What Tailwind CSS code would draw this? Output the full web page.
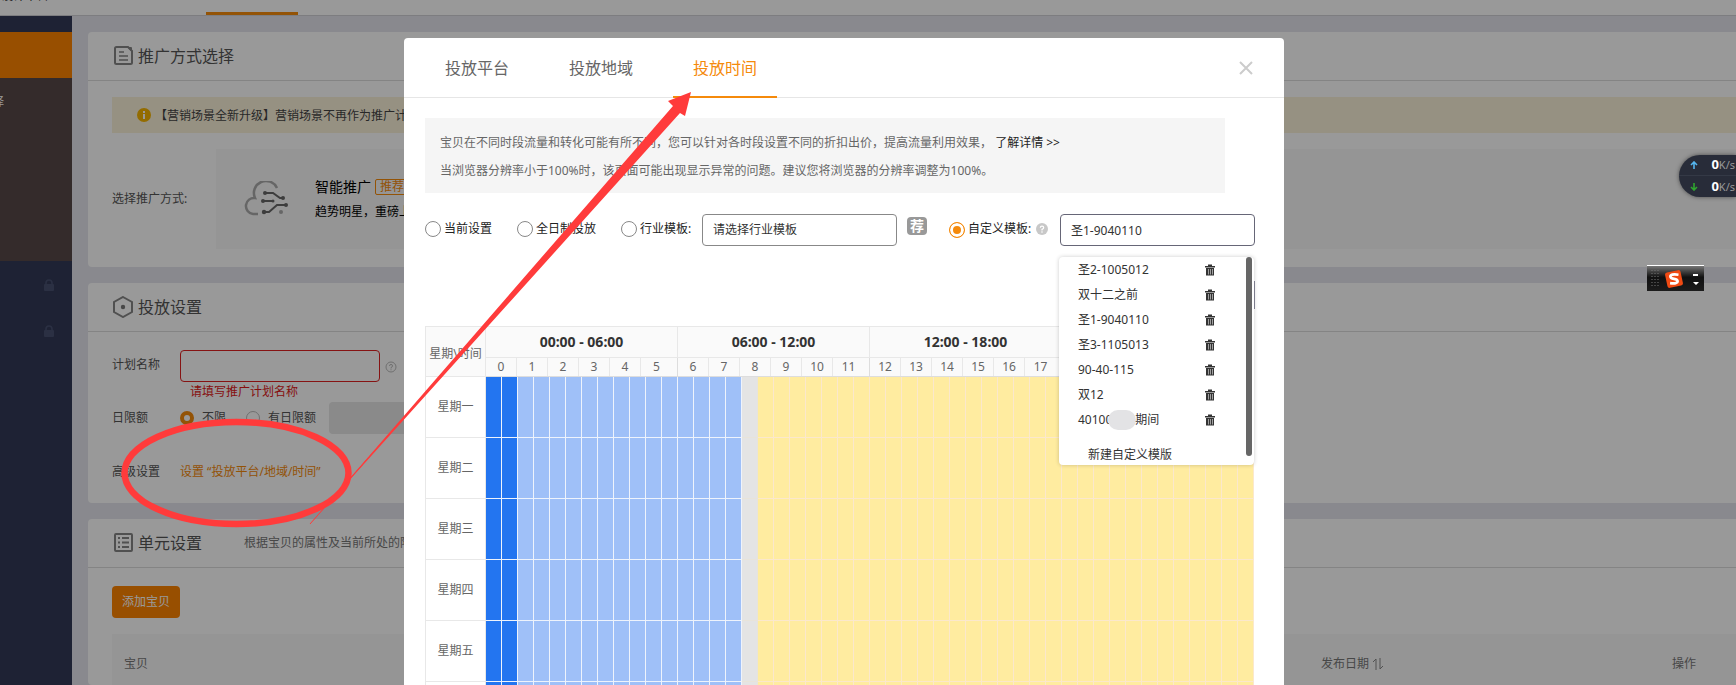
<!DOCTYPE html>
<html lang="zh-CN">
<head>
<meta charset="utf-8">
<title>投放设置</title>
<script src="https://cdn.jsdelivr.net/npm/@tailwindcss/browser@4"></script>
</head>
<body class="relative h-screen overflow-hidden bg-[#e4e5ed] font-['Noto_Sans','Noto_Sans_CJK_SC',sans-serif] text-xs text-[#555]">

<!-- Page behind the dialog -->
<div class="flex h-full flex-col">
  <header class="flex h-4 shrink-0 border-b border-[#d0d0d6] bg-white">
    <div class="flex w-[206px] items-start"><span class="-mt-3 h-4 pl-px text-[#333]">设计平台</span></div>
    <div class="w-[92px] border-b-3 border-[#f58a0b]"></div>
  </header>

  <div class="flex min-h-0 flex-1">
    <nav class="w-[72px] shrink-0 bg-[#323a57] pt-4">
      <div class="h-[46px] bg-[#fd8400]"></div>
      <div class="flex h-[183px] bg-[#584949] pt-3">
        <a href="#" class="flex h-5 w-1 items-end justify-end whitespace-nowrap text-white">场景选择</a>
      </div>
      <div class="flex flex-col items-end gap-[34px] pt-[18px] pr-[17px]">
        <svg class="h-3 w-3 text-[#485070]" viewBox="0 0 12 12"><path d="M3 6V4a3 3 0 0 1 6 0v2" fill="none" stroke="currentColor" stroke-width="1.6"/><rect x="1" y="5" width="10" height="7" rx="1" fill="currentColor"/></svg>
        <svg class="h-3 w-3 text-[#485070]" viewBox="0 0 12 12"><path d="M3 6V4a3 3 0 0 1 6 0v2" fill="none" stroke="currentColor" stroke-width="1.6"/><rect x="1" y="5" width="10" height="7" rx="1" fill="currentColor"/></svg>
      </div>
    </nav>

    <main class="flex min-w-0 flex-1 flex-col gap-4 pt-4 pl-4">
      <section class="h-[235px] shrink-0 rounded-l bg-white">
        <div class="flex h-[49px] items-center gap-1 border-b border-[#ddd] pl-6">
          <svg class="h-[22px] w-[22px]" viewBox="0 0 22 22" fill="none" stroke="#858585" stroke-width="2"><path d="M16 2H4.500Q3 2 3 3.500V17.500Q3 19 4.500 19H18.500Q20 19 20 17.500V6z"/><path d="M7 7h5M7 11h9M7 15h9" stroke-width="1.600"/><path d="M15 2l5 5V3q0-1-1-1z" fill="#858585" stroke="none"/></svg>
          <h2 class="text-base text-[#555]">推广方式选择</h2>
        </div>
        <div class="pt-4 pl-6">
          <div class="flex h-9 items-center gap-1 bg-[#faf2d9] pl-[25px]">
            <svg class="h-[14px] w-[14px]" viewBox="0 0 14 14"><circle cx="7" cy="7" r="7" fill="#f5b400"/><path d="M6 3h2v2H6zM6 6h2v5H6z" fill="#fff"/></svg>
            <span class="pt-px whitespace-nowrap text-[#444]">【营销场景全新升级】营销场景不再作为推广计划维度</span>
          </div>
          <div class="flex items-center pt-4">
            <span class="w-[104px]">选择推广方式:</span>
            <div class="flex h-[100px] flex-1 items-center bg-[#f8f8f8] pl-7">
              <svg class="h-9 w-11" viewBox="0 0 44 36" fill="none" stroke-width="2"><path d="M14 33H9A8 8 0 0 1 11 17A12 12 0 0 1 33 7" stroke="#aaa" stroke-width="2.500"/><g stroke="#666"><path d="M20 12h9l7 5h3M18 20h10M20 31h5l8-7h9"/></g><g fill="#666"><circle cx="21" cy="12" r="2"/><circle cx="39" cy="17" r="2"/><circle cx="19" cy="20" r="2"/><circle cx="29" cy="20" r="1.500"/><circle cx="20" cy="31" r="2.200"/><circle cx="42" cy="24" r="2"/></g><circle cx="37" cy="31" r="2" fill="#aaa"/></svg>
              <div class="flex flex-col gap-[5px] pl-[27px] text-black">
                <div class="flex items-center gap-1 text-sm whitespace-nowrap">智能推广 <span class="rounded-xs border border-[#f58a0b] px-1 text-xs leading-[14px] text-[#f58a0b]">推荐</span></div>
                <div class="whitespace-nowrap leading-5">趋势明星，重磅上线</div>
              </div>
            </div>
          </div>
        </div>
      </section>

      <section class="h-[220px] shrink-0 rounded-l bg-white">
        <div class="flex h-[49px] items-center gap-1 border-b border-[#ddd] pl-6">
          <svg class="h-[22px] w-[22px]" viewBox="0 0 22 22"><path d="M11 1l9 5v10l-9 5-9-5V6z" fill="none" stroke="#858585" stroke-width="2"/><circle cx="11" cy="11" r="2.200" fill="#777"/></svg>
          <h2 class="text-base text-[#555]">投放设置</h2>
        </div>
        <form class="pl-6">
          <div class="flex h-[50px] items-end">
            <label for="plan" class="w-[68px] leading-[34px]">计划名称</label>
            <input id="plan" class="h-8 w-[200px] rounded border border-[#e02020] px-2">
            <svg class="mb-[9px] ml-[5px] h-3 w-3" viewBox="0 0 12 12" fill="none" stroke="#bbb"><circle cx="6" cy="6" r="5"/><path d="M4.500 5q0-1.600 1.500-1.600T7.500 5Q7.500 6 6 6.600V7.500M6 8.300v1"/></svg>
          </div>
          <p class="pl-[78px] leading-5 text-[#e01818]">请填写推广计划名称</p>
          <div class="flex h-8 items-center">
            <span class="w-[68px]">日限额</span>
            <label class="flex items-center gap-2"><input type="radio" name="limit" checked class="h-[14px] w-[14px] appearance-none rounded-full border-4 border-[#f58a0b] bg-white">不限</label>
            <label class="ml-5 flex items-center gap-2"><input type="radio" name="limit" class="h-[14px] w-[14px] appearance-none rounded-full border border-[#bbb]">有日限额</label>
            <input aria-label="日限额" disabled class="ml-[13px] h-8 w-[100px] rounded bg-[#e6e6e6]">
          </div>
          <div class="flex h-[76px] items-center">
            <span class="w-[68px]">高级设置</span>
            <a href="#" class="text-[#f58a0b]">设置 “投放平台/地域/时间”</a>
          </div>
        </form>
      </section>

      <section class="min-h-0 flex-1 rounded-l bg-white">
        <div class="flex h-[49px] items-center gap-1 border-b border-[#ddd] pl-6">
          <svg class="h-[22px] w-[22px]" viewBox="0 0 22 22" fill="none" stroke="#858585" stroke-width="2"><rect x="3" y="2" width="17" height="17" rx="1"/><path d="M6 6h2M6 10.500h2M6 15h2M10 6h7M10 10.500h7M10 15h7"/></svg>
          <h2 class="text-base text-[#555]">单元设置</h2>
          <span class="pl-[38px] whitespace-nowrap text-[#777]">根据宝贝的属性及当前所处的阶段</span>
        </div>
        <div class="pt-[18px] pl-6">
          <button class="h-8 w-[68px] rounded bg-[#fd8400] text-white">添加宝贝</button>
          <table class="mt-4 w-full bg-[#f8f8f8] text-left">
            <thead><tr class="h-[60px]">
              <th class="pl-3 font-normal text-[#777]">宝贝</th>
              <th class="w-[351px] font-normal text-[#777]"><span class="flex items-center gap-[3px]">发布日期<svg class="h-3 w-3" viewBox="0 0 12 12" fill="none" stroke="#888"><path d="M1 4l3-3v11M8 0v11l3-3"/></svg></span></th>
              <th class="w-16 font-normal text-[#777]">操作</th>
            </tr></thead>
          </table>
        </div>
      </section>
    </main>
  </div>
</div>

<!-- Dialog -->
<div class="absolute inset-0 flex justify-center bg-black/40 pt-[38px] pr-12">
  <div role="dialog" aria-label="投放时间" class="w-[880px] rounded-t bg-white text-[#333]">
    <div class="flex h-[60px] items-stretch gap-5 border-b border-[#e6e6e6] pl-[21px] text-base text-[#666]">
      <button class="-mb-px w-[104px]">投放平台</button>
      <button class="-mb-px w-[104px]">投放地域</button>
      <button class="-mb-px w-[104px] border-b-2 border-[#f58a0b] pt-[2px] text-[#f58a0b]">投放时间</button>
      <button aria-label="关闭" class="mr-[31px] ml-auto"><svg class="h-[14px] w-[14px]" viewBox="0 0 14 14" stroke="#ccc" stroke-width="2"><path d="M1 1l12 12M13 1L1 13"/></svg></button>
    </div>

    <div class="mx-[21px]">
      <div class="mt-5 mr-[38px] bg-[#f5f5f5] px-[15px] pt-[11px] pb-2 leading-7 text-[#666]">
        <p>宝贝在不同时段流量和转化可能有所不同，您可以针对各时段设置不同的折扣出价，提高流量利用效果， <a href="#" class="text-[#222]">了解详情 &gt;&gt;</a></p>
        <p>当浏览器分辨率小于100%时，该页面可能出现显示异常的问题。建议您将浏览器的分辨率调整为100%。</p>
      </div>

      <div class="relative mt-[21px] mr-2 flex h-8 items-center text-[#222]">
        <label class="flex w-[92px] items-center gap-[3px] pb-[2px]"><input type="radio" name="tpl" class="h-4 w-4 appearance-none rounded-full border border-[#888]">当前设置</label>
        <label class="flex w-[104px] items-center gap-[3px] pb-[2px]"><input type="radio" name="tpl" class="h-4 w-4 appearance-none rounded-full border border-[#888]">全日制投放</label>
        <label class="flex w-[81px] items-center gap-[3px] pb-[2px]"><input type="radio" name="tpl" class="h-4 w-4 appearance-none rounded-full border border-[#888]">行业模板:</label>
        <select aria-label="行业模板" class="h-8 w-[195px] appearance-none rounded border border-[#888] bg-white px-[10px] text-[#333]"><option>请选择行业模板</option></select>
        <span class="mb-2 ml-[10px] flex h-[18px] w-5 items-center justify-center rounded-sm bg-[#999] text-sm leading-none font-bold text-white">荐</span>
        <label class="ml-[22px] flex items-center gap-[3px]"><input type="radio" name="tpl" checked class="h-4 w-4 appearance-none rounded-full border border-[#f58a0b] bg-[#f58a0b] shadow-[inset_0_0_0_3px_#fff]"><span class="pb-[2px]">自定义模板:</span></label>
        <svg class="mb-[3px] ml-[5px] h-3 w-3" viewBox="0 0 12 12"><circle cx="6" cy="6" r="6" fill="#c8c8c8"/><path d="M4.300 4.800q0-1.700 1.700-1.700t1.700 1.600Q7.700 5.800 6 6.400V7.500M6 8.300v1.400" fill="none" stroke="#fff" stroke-width="1.200"/></svg>
        <input aria-label="自定义模板" value="圣1-9040110" class="ml-auto h-8 w-[195px] rounded border border-[#667] px-[10px] text-[#333]">

        <!-- Template list -->
        <div class="absolute top-[43px] right-px z-10 flex h-[208px] w-[195px] rounded bg-white shadow-[0_0_4px_rgba(0,0,0,0.2)]">
          <div class="flex-1 pl-[19px] text-[#333]">
            <ul id="templates"></ul>
            <button class="mt-[13px] ml-[10px] leading-5">新建自定义模版</button>
          </div>
          <div class="mr-[2px] h-[199px] w-[6px] rounded-full bg-[#666]"></div>
        </div>
        <div class="absolute top-[67px] right-0 h-7 w-px bg-[#889]"></div>
      </div>

      <table class="mt-20 w-[829px] table-fixed border-separate border-spacing-0 border-t border-l border-[#e8e8e8] text-[#666]">
        <colgroup><col class="w-[60px]"></colgroup>
        <thead class="bg-[#fafafa]">
          <tr id="periods" class="h-[31px]"><th rowspan="2" class="border-r border-b border-[#e8e8e8] pt-1 font-normal whitespace-nowrap">星期\时间</th></tr>
          <tr id="hours" class="h-[19px]"></tr>
        </thead>
        <tbody id="days"></tbody>
      </table>
    </div>
  </div>
</div>

<!-- Network speed widget -->
<div class="absolute top-[155px] right-0 flex h-[42px] w-[57px] flex-col rounded-l-full bg-[#282c39] shadow-[0_0_4px_rgba(0,0,0,0.5)]">
  <div class="flex h-[21px] items-center justify-between border-b border-[#343946] pr-px pl-[11px] text-[11px] whitespace-nowrap text-[#999]">
    <svg class="h-2 w-2" viewBox="0 0 8 8" fill="none" stroke="#55b5ee" stroke-width="1.600"><path d="M1 4l3-3 3 3M4 1v7"/></svg><span><b class="text-[13px] text-white">0</b>K/s</span>
  </div>
  <div class="flex h-[21px] items-center justify-between pr-px pl-[11px] text-[11px] whitespace-nowrap text-[#999]">
    <svg class="h-2 w-2" viewBox="0 0 8 8" fill="none" stroke="#2fa52f" stroke-width="1.600"><path d="M1 4l3 3 3-3M4 7V0"/></svg><span><b class="text-[13px] text-white">0</b>K/s</span>
  </div>
</div>

<!-- Input method bar -->
<div class="absolute top-[265px] right-8 flex h-[26px] w-[57px] items-center border-t border-white bg-linear-to-b from-[#777] via-[#111] via-45% to-[#1c1c1c] pl-1">
  <svg class="h-5 w-[10px]" viewBox="0 0 10 20" stroke="#777" stroke-dasharray="1 2"><path d="M1 1v18M4 1v18M7 1v18"/></svg>
  <svg class="ml-1 h-[18px] w-[18px]" viewBox="0 0 16 16"><rect x="1" y="1" width="14" height="14" rx="2" fill="#f04a13" transform="rotate(-12 8 8)"/><path d="M12 4.200Q4.800 3.200 4.800 5.800q0 1.600 3.200 2.100t3.200 2.200q0 2.300-6.700 1.500" fill="none" stroke="#fff" stroke-width="2.400"/></svg>
  <svg class="ml-[10px] h-[14px] w-[6px]" viewBox="0 0 6 14" fill="#fff"><path d="M0 2h5v2H0zM0 10h6l-3 3z"/></svg>
</div>

<!-- Red annotation: ellipse and arrow -->
<svg class="pointer-events-none absolute top-0 left-0 h-[685px] w-[1736px]" viewBox="0 0 1736 685">
  <ellipse cx="236.500" cy="473" rx="112" ry="51" fill="none" stroke="#ff3b3b" stroke-width="6.500"/>
  <path d="M310 524L673 106L668 101L691 92L685 116L680 113z" fill="#ff3b3b"/>
  <path d="M310 524L400 422" stroke="#ff3b3b"/>
</svg>

<script>
  const names = ['圣2-1005012', '双十二之前', '圣1-9040110', '圣3-1105013', '90-40-115', '双12', '40100'];
  document.getElementById('templates').innerHTML = names.map((n, i) => `
    <li class="flex h-[25px] items-center"><span class="flex-1 flex items-center whitespace-nowrap">${n}${i === 6 ? '<span class="-mr-px -ml-1 h-5 w-7 rounded-full bg-[#e3e3e5]"></span>期间' : ''}</span>
      <button aria-label="删除" class="mr-[31px]"><svg class="h-3 w-[10px]" viewBox="0 0 10 12"><path d="M0 2h3V0.500h4V2h3v1.500H0zM1 4h8v7.500H1z" fill="#333"/><path d="M3.500 5v5.500M5.500 5v5.500M7.500 5v5.500" stroke="#bbb" stroke-width=".8"/></svg></button></li>`).join('');

  const periods = ['00:00 - 06:00', '06:00 - 12:00', '12:00 - 18:00', '18:00 - 24:00'];
  document.getElementById('periods').insertAdjacentHTML('beforeend', periods.map(p =>
    `<th colspan="12" class="border-r border-b border-[#e8e8e8] p-0 text-sm text-[#333]">${p}</th>`).join(''));
  document.getElementById('hours').innerHTML = periods.map((p, g) =>
    `<td colspan="12" class="border-r border-b border-[#ddd] p-0"><div class="flex h-[18px] text-center leading-[18px]">${
      [0, 1, 2, 3, 4, 5].map(h => `<span class="w-[31px] ${h < 5 ? 'border-r border-[#e8e8e8]' : ''}">${g * 6 + h}</span>`).join('')
    }</div></td>`).join('');

  const cellClass = i => i < 2 ? 'bg-[#2375f0] border-[#eef3fc]'
    : i < 16 ? 'bg-[#9fc0f8] border-[#eef3fc]'
    : i < 17 ? 'bg-[#e4e4e4] border-[#e8e4da]'
    : 'bg-[#ffeca0] border-[#fbe8cc]';
  document.getElementById('days').innerHTML = ['一', '二', '三', '四', '五', '六'].map(d =>
    `<tr class="h-[61px]"><th class="border-r border-b border-[#e8e8e8] font-normal">星期${d}</th>${
      Array.from({length: 48}, (_, i) => `<td class="border-r border-b ${cellClass(i)}"></td>`).join('')}</tr>`).join('');
</script>
</body>
</html>
